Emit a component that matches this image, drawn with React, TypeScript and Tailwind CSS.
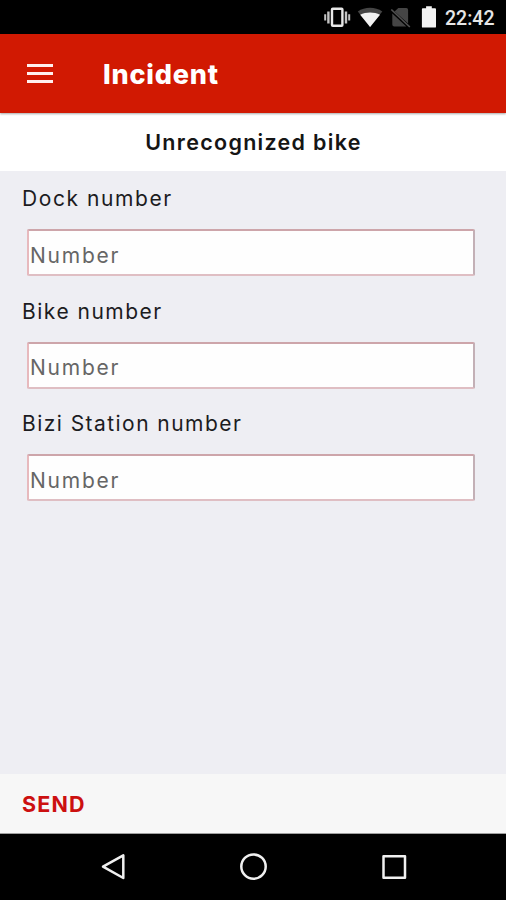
import { useState } from 'react';

interface Field {
  id: string;
  label: string;
  tracking: string;
}

const fields: Field[] = [
  { id: 'dock', label: 'Dock number', tracking: 'tracking-[1.57px]' },
  { id: 'bike', label: 'Bike number', tracking: 'tracking-[1.5px]' },
  { id: 'station', label: 'Bizi Station number', tracking: 'tracking-[1.45px]' },
];

function StatusBar() {
  return (
    <div className="flex h-[34px] items-center justify-end bg-black pr-[11px]">
      <svg className="h-[34px] w-[122px]" viewBox="317.2 0 122 34" fill="none">
        {/* vibrate */}
        <rect x="332.2" y="8.8" width="10.4" height="17" rx="0.8" stroke="#e8e8e8" strokeWidth="2.4" />
        <path d="M328.6 11.5v12M346.2 11.5v12" stroke="#c4c4c4" strokeWidth="2.4" />
        <path d="M325.4 14.2v6.3M349.4 14.2v6.3" stroke="#c4c4c4" strokeWidth="2" />
        {/* wifi */}
        <path d="M358 11.5C365 6.5 375.5 6.5 382.5 11.5L370.3 27z" fill="#454545" />
        <path d="M360.4 14.7C366 11.6 374.5 11.6 380.2 14.7L370.3 27z" fill="#f2f2f2" />
        {/* no sim */}
        <path d="M398.5 8H406.5Q408.3 8 408.3 10V23.5L394.8 11.5zM392.5 13.5L406.5 26.5H394.5Q392.5 26.5 392.5 24.5z" fill="#454545" />
        <path d="M391.5 9.5L410 27" stroke="#505050" strokeWidth="1.7" />
        {/* battery */}
        <path d="M426.3 6.3h5.7v2h3.3q.9 0 .9.9v17.5q0 .9-.9.9h-12.3q-.9 0-.9-.9V9.2q0-.9.9-.9h3.3z" fill="#f2f2f2" />
      </svg>
      <span className="mt-[3px] ml-[6px] w-[50px] whitespace-nowrap font-[Roboto,sans-serif] text-[19.5px] leading-none font-medium text-[#e6e6e6]">
        22:42
      </span>
    </div>
  );
}

function Header() {
  return (
    <header className="relative flex h-[79px] items-center bg-[#d11902] pl-[27px] shadow-[0_1px_2px_rgba(0,0,0,0.35)]">
      <button className="flex w-[26px] flex-col gap-[5px]" aria-label="Menu">
        <span className="h-[3px] w-full bg-[#fff0ee]"></span>
        <span className="h-[3px] w-full bg-[#fff0ee]"></span>
        <span className="h-[3px] w-full bg-[#fff0ee]"></span>
      </button>
      <h1 className="mt-px ml-[50px] text-[27px] leading-none font-extrabold tracking-[0.8px] text-white">Incident</h1>
    </header>
  );
}

function NavBar() {
  return (
    <nav className="h-[66px] bg-black">
      <svg className="h-[66px] w-[506px]" viewBox="0 834 506 66" fill="none" stroke="#f0f0f0" strokeWidth="2.5" strokeLinejoin="round">
        <path d="M123.3 855.3V878L103 866.7z" />
        <circle cx="253.5" cy="866.6" r="12.2" />
        <rect x="383.5" y="856.2" width="21.5" height="21.5" />
      </svg>
    </nav>
  );
}

export default function App() {
  const [values, setValues] = useState<Record<string, string>>({});

  return (
    <div className="flex h-[900px] w-[506px] flex-col overflow-hidden bg-[#eeeef3] font-[Inter,sans-serif]">
      <StatusBar />
      <Header />
      <div className="flex h-[58px] items-center justify-center bg-white pt-0.5 pl-px">
        <h2 className="text-[21.5px] leading-none font-semibold tracking-[1.3px] text-[#151515]">
          Unrecognized bike
        </h2>
      </div>
      <main className="flex-1 pt-[14px]">
        {fields.map((field) => (
          <div key={field.id} className="h-[112.5px]">
            <label
              htmlFor={field.id}
              className={`block h-7 pl-[22px] text-[21px] leading-7 text-[#1c1c1f] ${field.tracking}`}
            >
              {field.label}
            </label>
            <input
              id={field.id}
              value={values[field.id] || ''}
              onChange={(e) => setValues({ ...values, [field.id]: e.target.value })}
              placeholder="Number"
              className="mt-4 ml-[27px] block h-[47px] w-[448px] rounded-[2px] border-2 border-t-[#cda5aa] border-r-[#c3b0b6] border-b-[#dfbec3] border-l-[#e7b9bd] bg-[#fefefe] pt-[5px] pl-px text-[21px] tracking-[1.75px] placeholder:text-[#666666]"
            />
          </div>
        ))}
      </main>
      <footer className="flex h-[60px] items-center border-b border-[#a0a0a0] bg-[#f7f7f7] pt-[3px] pl-[22px]">
        <button className="text-[21.5px] leading-none font-bold tracking-[1.2px] text-[#cc1010]">SEND</button>
      </footer>
      <NavBar />
    </div>
  );
}
